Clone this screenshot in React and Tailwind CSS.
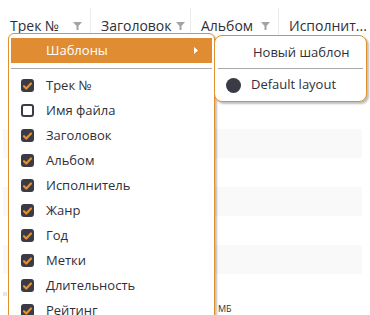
import React from 'react';

const columns = [
  { title: 'Трек №', width: 'w-[90px] shrink-0' },
  { title: 'Заголовок', width: 'w-[100px] shrink-0' },
  { title: 'Альбом', width: 'w-[88px] shrink-0' },
  { title: 'Исполнит...', width: 'flex-1 min-w-0 overflow-hidden' },
];

const fields = [
  { label: 'Трек №', checked: true },
  { label: 'Имя файла', checked: false },
  { label: 'Заголовок', checked: true },
  { label: 'Альбом', checked: true },
  { label: 'Исполнитель', checked: true },
  { label: 'Жанр', checked: true },
  { label: 'Год', checked: true },
  { label: 'Метки', checked: true },
  { label: 'Длительность', checked: true },
  { label: 'Рейтинг', checked: true },
];

const FilterIcon = () => (
  <svg width="9" height="8" viewBox="0 0 9 8" className="shrink-0">
    <path d="M0 0h9L5.5 4v4h-2V4z" fill="#a3a3a3" />
  </svg>
);

const Checkbox = ({ checked }) =>
  checked ? (
    <span className="w-[13px] h-[13px] rounded-[3px] bg-[#3b3b45] flex items-center justify-center shrink-0">
      <svg width="9" height="8" viewBox="0 0 9 8">
        <path d="M1 4.2l2.3 2.3L8 1.5" stroke="#e58f2e" strokeWidth="2.2" fill="none" strokeLinecap="round" strokeLinejoin="round" />
      </svg>
    </span>
  ) : (
    <span className="w-[13px] h-[13px] rounded-[3px] border-2 border-[#3b3b45] bg-white shrink-0" />
  );

export default function App() {
  return (
    <div className="relative w-[370px] h-[315px] bg-white overflow-hidden font-['Open_Sans',sans-serif] text-[#2f2f3a]">
      {/* Table header */}
      <div className="flex mt-[8px] h-[32px]">
        {columns.map((col, i) => (
          <div
            key={col.title}
            className={`${col.width} flex items-center pl-[10px] pr-[8px] pt-[3px] gap-1 ${i > 0 ? 'border-l border-[#ececec]' : ''}`}
          >
            <span className="text-[14px] leading-none whitespace-nowrap flex-1">{col.title}</span>
            {i < 3 && <FilterIcon />}
          </div>
        ))}
      </div>

      {/* Table body stripes */}
      <div className="flex flex-col pl-[3px] pr-[8px] pt-[89px]">
        {[0, 1, 2, 3, 4, 5].map((n) => (
          <div key={n} className={`h-[29px] ${n % 2 === 0 ? 'bg-[#f9f9f9]' : 'bg-white'}`} />
        ))}
      </div>
      <span className="absolute left-[218px] top-[302px] text-[9px] text-[#333]">МБ</span>
      <span className="absolute left-[3px] top-[292px] w-[4px] h-[4px] bg-[#e6e6e6]" />

      {/* Context menu */}
      <div className="absolute left-[8px] top-[33px] w-[207px] h-[300px] bg-white border border-[#e0902f] rounded-[6px] shadow-[2px_2px_2px_rgba(0,0,0,0.25)] px-[2px] pt-[4px]">
        <div className="h-[25px] bg-[#df8c33] flex items-center text-white text-[13px] pl-[35px] pr-[14px]">
          <span className="flex-1">Шаблоны</span>
          <svg width="4" height="7" viewBox="0 0 4 7">
            <path d="M0 0l4 3.5L0 7z" fill="#fff" />
          </svg>
        </div>
        <div className="h-px bg-[#a8a8a8] mt-[5px] mb-[4px]" />
        <div className="flex flex-col">
          {fields.map((f) => (
            <div key={f.label} className="h-[25px] flex items-center gap-[12px] pl-[10px] text-[13px]">
              <Checkbox checked={f.checked} />
              <span>{f.label}</span>
            </div>
          ))}
        </div>
      </div>

      {/* Submenu */}
      <div className="absolute left-[214px] top-[35px] w-[153px] h-[67px] bg-white border border-[#e0902f] rounded-[8px] shadow-[2px_2px_2px_rgba(0,0,0,0.25)] px-[3px]">
        <div className="h-[32px] flex items-center pl-[35px] pt-[2px] text-[13px]">Новый шаблон</div>
        <div className="h-px bg-[#a8a8a8]" />
        <div className="h-[32px] flex items-center gap-[10px] pl-[8px] text-[13px]">
          <span className="w-[15px] h-[15px] rounded-full bg-[#3b3b45]" />
          <span>Default layout</span>
        </div>
      </div>
    </div>
  );
}
